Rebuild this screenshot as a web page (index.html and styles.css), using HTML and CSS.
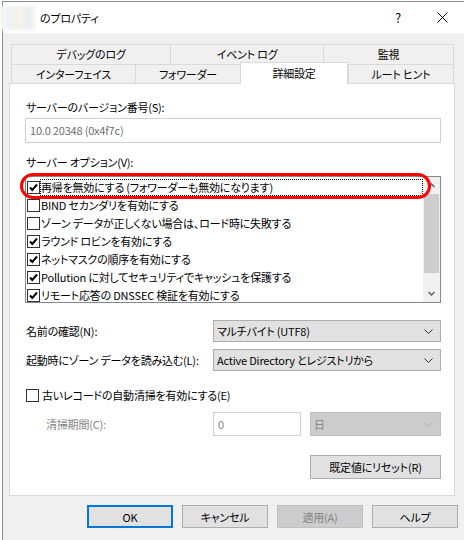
FILE: index.html
```html
<!DOCTYPE html>
<html lang="ja">
<head>
    <meta charset="UTF-8">
    <title>のプロパティ</title>
    <link rel="stylesheet" href="styles.css">
</head>
<body>

<div class="window">
    <div class="titlebar">
        <span class="server-name"></span>
        <span class="title">のプロパティ</span>
        <span class="help">?</span>
        <svg class="close" width="11" height="11" viewBox="0 0 11 11">
            <path d="M0.5 0.5 L10.5 10.5 M10.5 0.5 L0.5 10.5" stroke="#000" stroke-width="1" fill="none"/>
        </svg>
    </div>

    <div class="client">
        <!-- two rows of tabs, the front row holds the selected one -->
        <div class="tabs">
            <div class="tab-row">
                <div class="tab tab-debug">デバッグのログ</div>
                <div class="tab tab-event">イベント ログ</div>
                <div class="tab tab-monitor last">監視</div>
            </div>
            <div class="tab-row front">
                <div class="tab tab-iface">インターフェイス</div>
                <div class="tab tab-fwd">フォワーダー</div>
                <div class="tab tab-adv selected">詳細設定</div>
                <div class="tab tab-root last">ルート ヒント</div>
            </div>
        </div>

        <div class="panel">
            <div class="label">サーバーのバージョン番号(S):</div>
            <div class="textbox readonly">10.0 20348 (0x4f7c)</div>

            <div class="label options-label">サーバー オプション(V):</div>
            <div class="listbox-wrap">
                <div class="listbox">
                    <div class="items">
                        <div class="item">
                            <span class="check on"></span>
                            <span class="item-text focused">再帰を無効にする (フォワーダーも無効になります)</span>
                        </div>
                        <div class="item">
                            <span class="check"></span>
                            <span class="item-text">BIND セカンダリを有効にする</span>
                        </div>
                        <div class="item">
                            <span class="check"></span>
                            <span class="item-text">ゾーン データが正しくない場合は、ロード時に失敗する</span>
                        </div>
                        <div class="item">
                            <span class="check on"></span>
                            <span class="item-text">ラウンド ロビンを有効にする</span>
                        </div>
                        <div class="item">
                            <span class="check on"></span>
                            <span class="item-text">ネットマスクの順序を有効にする</span>
                        </div>
                        <div class="item">
                            <span class="check on"></span>
                            <span class="item-text">Pollution に対してセキュリティでキャッシュを保護する</span>
                        </div>
                        <div class="item">
                            <span class="check on"></span>
                            <span class="item-text">リモート応答の DNSSEC 検証を有効にする</span>
                        </div>
                    </div>
                    <div class="scrollbar">
                        <div class="arrow">
                            <svg width="7" height="5" viewBox="0 0 7 5"><path d="M0.5 4 L3.5 1 L6.5 4" stroke="#606060" stroke-width="1.5" fill="none"/></svg>
                        </div>
                        <div class="track"><div class="thumb"></div></div>
                        <div class="arrow">
                            <svg width="7" height="5" viewBox="0 0 7 5"><path d="M0.5 1 L3.5 4 L6.5 1" stroke="#606060" stroke-width="1.5" fill="none"/></svg>
                        </div>
                    </div>
                </div>
                <!-- red marker drawn around the first option -->
                <div class="marker"></div>
            </div>

            <div class="field-row first">
                <span>名前の確認(N):</span>
                <div class="combo">マルチバイト (UTF8)<svg class="chev" width="9" height="5" viewBox="0 0 9 5"><path d="M0.5 0.5 L4.5 4.5 L8.5 0.5" stroke="#333" fill="none"/></svg></div>
            </div>
            <div class="field-row">
                <span>起動時にゾーン データを読み込む(L):</span>
                <div class="combo">Active Directory とレジストリから<svg class="chev" width="9" height="5" viewBox="0 0 9 5"><path d="M0.5 0.5 L4.5 4.5 L8.5 0.5" stroke="#333" fill="none"/></svg></div>
            </div>

            <div class="check-row">
                <span class="check big"></span>
                <span>古いレコードの自動清掃を有効にする(E)</span>
            </div>

            <div class="scavenge-row">
                <span class="disabled-text">清掃期間(C):</span>
                <div class="textbox number">0</div>
                <div class="combo disabled">日<svg class="chev" width="9" height="5" viewBox="0 0 9 5"><path d="M0.5 0.5 L4.5 4.5 L8.5 0.5" stroke="#a6a6a6" fill="none"/></svg></div>
            </div>

            <div class="reset-row">
                <button class="btn reset">既定値にリセット(R)</button>
            </div>
        </div>

        <div class="dialog-buttons">
            <button class="btn default">OK</button>
            <button class="btn">キャンセル</button>
            <button class="btn" disabled>適用(A)</button>
            <button class="btn">ヘルプ</button>
        </div>
    </div>
</div>

</body>
</html>
```

FILE: styles.css
```css
body {
    margin: 0;
    background-color: #fff;
    font-family: "Noto Sans CJK JP", "Noto Sans", sans-serif;
    font-size: 11px;
    letter-spacing: -0.2px;
    font-feature-settings: "palt";
    color: #000;
}

.window {
    margin: 1px 0 0 2px;
    border-top: 1px solid #8a8a8a;
    border-left: 1px solid #8a8a8a;
    height: 538px;
    background-color: #f0f0f0;
}

/* title bar */
.titlebar {
    height: 31px;
    background-color: #fff;
    display: flex;
    align-items: center;
}

.server-name {
    width: 36px;
    height: 24px;
    margin-left: -3px;
    background: linear-gradient(90deg, #f7f7f5 0%, #eef0f2 30%, #f6f3e8 55%, #e9edf2 80%, #f8f8f8 100%);
    filter: blur(1.5px);
}

.title {
    margin-left: 4px;
}

.help {
    margin-left: auto;
    font-size: 13px;
    margin-right: 36px;
}

.close {
    margin-right: 16px;
}

/* tabs */
.tabs {
    margin: 11px 0 0 8px;
}

.tab-row {
    display: flex;
    align-items: flex-end;
}

.tab {
    height: 19px;
    border-top: 1px solid #d9d9d9;
    border-left: 1px solid #d9d9d9;
    background-color: #f0f0f0;
    text-align: center;
    line-height: 19px;
}

.tab.last {
    border-right: 1px solid #d9d9d9;
}

.tab-debug { width: 158px; }
.tab-event { width: 152px; }
.tab-monitor { width: 129px; }

.tab-row.front .tab {
    height: 18px;
    line-height: 18px;
}

.tab-iface { width: 123px; }
.tab-fwd { width: 104px; }
.tab-root { width: 104px; }

/* the active tab rises 2px above its row and covers the page border */
.tab-row.front .tab.selected {
    width: 106px;
    height: 21px;
    line-height: 20px;
    margin-top: -2px;
    margin-bottom: -1px;
    border-right: 1px solid #d9d9d9;
    background-color: #fff;
    position: relative;
    z-index: 1;
}

/* property page */
.panel {
    margin-left: 6px;
    width: 416px;
    border: 1px solid #d9d9d9;
    background-color: #fff;
    padding: 15px 13px 16px 15px;
}

.label {
    height: 16px;
    line-height: 16px;
    padding-left: 1px;
}

.textbox {
    box-sizing: border-box;
    border: 1px solid #cfcfcf;
    background-color: #fff;
    padding-left: 4px;
}

.textbox.readonly {
    margin-top: 3px;
    height: 25px;
    line-height: 22px;
    color: #6d6d6d;
}

.options-label {
    margin-top: 11px;
}

.listbox-wrap {
    position: relative;
    margin-top: 6px;
}

.listbox {
    box-sizing: border-box;
    height: 127px;
    border: 1px solid #828790;
    display: flex;
    overflow: hidden;
}

.items {
    flex: 1;
    padding-top: 1px;
}

.item {
    height: 18px;
    display: flex;
    align-items: center;
}

.check {
    box-sizing: border-box;
    width: 13px;
    height: 13px;
    margin-left: 1px;
    border: 1px solid #333;
    background-color: #fff;
    flex: none;
}

.check.on {
    background: #fff url("data:image/svg+xml,%3Csvg xmlns='http://www.w3.org/2000/svg' width='11' height='11'%3E%3Cpath d='M2 5.5 L4.3 8 L9 2.5' stroke='%23000' stroke-width='2' fill='none'/%3E%3C/svg%3E") no-repeat center;
}

.item-text {
    padding: 0 1px;
    height: 17px;
    line-height: 17px;
    white-space: nowrap;
}

.item-text.focused {
    flex: 1;
    outline: 1px dotted #000;
    outline-offset: -1px;
}

.scrollbar {
    width: 17px;
    background-color: #f0f0f0;
    display: flex;
    flex-direction: column;
}

.arrow {
    height: 17px;
    display: flex;
    align-items: center;
    justify-content: center;
}

.track {
    flex: 1;
    padding: 0 1px;
}

.thumb {
    height: 79px;
    background-color: #cdcdcd;
}

.marker {
    position: absolute;
    left: -5px;
    top: -3px;
    width: 405px;
    height: 20px;
    border: 3px solid #f00;
    border-radius: 13px;
}

.field-row {
    display: grid;
    grid-template-columns: 188px 1fr;
    align-items: center;
    margin-top: 7px;
    padding-left: 1px;
    white-space: nowrap;
}

.field-row.first {
    margin-top: 17px;
}

.combo {
    box-sizing: border-box;
    height: 22px;
    margin-left: -1px;
    border: 1px solid #adadad;
    background-color: #e1e1e1;
    display: flex;
    align-items: center;
    padding: 0 7px 0 3px;
}

.combo .chev {
    margin-left: auto;
}

.combo.disabled {
    height: 24px;
    margin-left: 0;
    border-color: #bfbfbf;
    background-color: #cccccc;
    color: #838383;
}

.check-row {
    margin-top: 16px;
    height: 16px;
    display: flex;
    align-items: center;
}

.check.big {
    margin-right: 3px;
}

.scavenge-row {
    margin-top: 9px;
    display: grid;
    grid-template-columns: 179px 88px 131px;
    column-gap: 9px;
    align-items: center;
}

.disabled-text {
    color: #838383;
    padding-left: 21px;
}

.textbox.number {
    height: 24px;
    line-height: 22px;
    color: #838383;
}

.reset-row {
    margin-top: 19px;
    display: flex;
    justify-content: flex-end;
}

.btn {
    box-sizing: border-box;
    height: 24px;
    width: 131px;
    border: 1px solid #adadad;
    background-color: #e1e1e1;
    font-family: inherit;
    font-size: 11px;
    letter-spacing: -0.2px;
    font-feature-settings: "palt";
    color: #000;
    padding: 0;
}

.dialog-buttons {
    display: flex;
    gap: 9px;
    margin-top: 9px;
    padding-left: 84px;
}

.dialog-buttons .btn {
    width: 86px;
    height: 23px;
}

.btn.default {
    border: 2px solid #0078d7;
}

.btn:disabled {
    background-color: #cccccc;
    border-color: #bfbfbf;
    color: #838383;
}
```
